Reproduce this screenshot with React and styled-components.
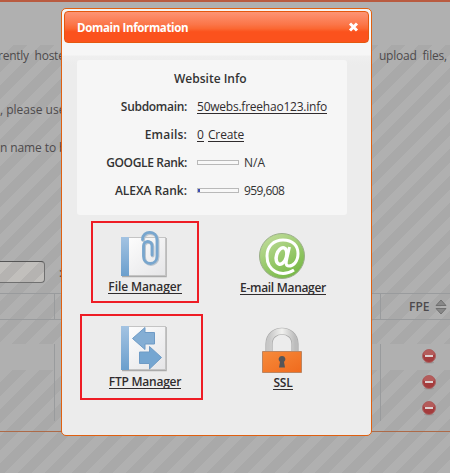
import React from 'react';
import styled, { createGlobalStyle } from 'styled-components';

const Global = createGlobalStyle`
  *{box-sizing:border-box}
  body{margin:0;overflow:hidden;font-family:"Open Sans","Noto Sans",sans-serif;font-size:12px;color:#333}
`;
const Screen = styled.div`
  position:relative;width:450px;height:473px;overflow:hidden;
  background:linear-gradient(135deg,#a9a9a9 25%,#b0b0b0 25%,#b0b0b0 50%,#a9a9a9 50%,#a9a9a9 75%,#b0b0b0 75%) 5px 0/27px 27px;
`;
const Page = styled.main`
  display:flex;flex-direction:column;height:473px;color:#4d4a4c;
`;
const TopRule = styled.div`height:2px;background:#b95b40;flex:none;`;
const Masthead = styled.div`height:43px;flex:none;background:#b0b0b0;`;
const Copy = styled.section`
  height:248px;flex:none;display:flex;flex-direction:column;
`;
const Line = styled.p`
  display:flex;justify-content:space-between;margin:${p => p.$top}px 0 0;height:16px;line-height:16px;
  flex:none;white-space:pre;padding-right:3px;font-weight:500;
`;
const Phrase = styled.span`
  letter-spacing:${p => p.$track || 0}px;margin-left:${p => p.$shift || 0}px;
`;
const SearchRow = styled.div`
  display:flex;gap:14px;margin-top:105px;height:22px;align-items:center;
`;
const Field = styled.div`
  width:45px;height:22px;border:1px solid #707070;border-top-color:#555;border-left:0;border-radius:0 4px 4px 0;
  background:linear-gradient(135deg,#b5b3b1 25%,#c1bfbc 25%,#c1bfbc 50%,#b5b3b1 50%,#b5b3b1 75%,#c1bfbc 75%) 5px 8px/27px 27px;
`;
const TableHead = styled.div`
  display:grid;grid-template-columns:54px 326px 1fr;height:27px;flex:none;
  border-top:1px solid #999b9d;border-bottom:1px solid #999b9d;
`;
const Cell = styled.div`
  border-left:${p => p.$rule ? '1px solid #999b9d' : '0'};
  display:flex;align-items:center;padding-left:${p => p.$pad || 0}px;gap:6px;
  font-weight:600;
`;
const Gap = styled.div`height:24px;flex:none;`;
const Row = styled.div`
  display:grid;grid-template-columns:54px 326px 1fr;height:${p => p.$h}px;flex:none;
  background:${p => p.$striped ? 'transparent' : '#b0b0b0'};
  svg{margin-bottom:1px}
`;
const TableFoot = styled.div`height:10px;flex:none;`;
const Footer = styled.div`flex:1;border-top:1px solid #ad6a48;`;

const Dialog = styled.section`
  position:absolute;left:61px;top:8px;width:311px;height:428px;padding:2px;
  border:1px solid #e06010;border-radius:5px;
  background:linear-gradient(#f6f6f6 0,#f6f6f6 46px,#efefef 47px,#ececec 56px,#ececec 100%);
`;
const Header = styled.header`
  display:flex;justify-content:space-between;align-items:center;height:32px;
  padding:0 9px 0 12px;border:1px solid #e4580f;border-radius:4px;color:#fff;font-weight:700;font-size:11.5px;
  background:linear-gradient(#fd9574 0,#fb7548 42%,#fb6833 55%,#fb521d 66%,#fb521d 100%);
`;
const Info = styled.div`
  margin:17px 0 0 13px;width:270px;height:155px;padding-top:9px;background:#f6f6f6;border-radius:3px;
`;
const InfoTitle = styled.h2`
  margin:0 0 8px;height:20px;line-height:20px;font-size:12px;font-weight:600;padding-left:97px;
`;
const Fact = styled.div`
  display:grid;grid-template-columns:110px 1fr;column-gap:10px;height:28px;line-height:20px;white-space:nowrap;
`;
const Label = styled.strong`
  justify-self:end;font-weight:600;letter-spacing:${p => p.$track || 0}px;
`;
const Value = styled.div`display:flex;gap:4px;font-weight:500;`;
const Link = styled.a`
  color:#302c2e;border-bottom:1px solid #302c2e;height:14px;line-height:14px;flex:none;
  margin-top:${p => p.$mt ?? 3}px;
  letter-spacing:${p => p.$track || 0}px;font-weight:${p => p.$bold ? 600 : 500};white-space:nowrap;
`;
const Meter = styled.span`
  width:42px;height:5px;border:1px solid #b9b9b9;margin:7px 1px 0 0;background:#f8f8f8;
`;
const MeterFill = styled.span`display:block;width:2px;height:3px;background:#3e4cb4;`;
const Tools = styled.nav`
  display:grid;grid-template-columns:139px 136px;grid-template-rows:93px 86px;
  margin:6px 0 0 27px;
`;
const Tool = styled.div`
  display:flex;flex-direction:column;align-items:center;
  width:${p => p.$w}px;height:${p => p.$h}px;padding-top:${p => p.$pt}px;padding-left:${p => p.$pl || 0}px;
  margin-left:${p => p.$ml || 0}px;
  border:2px solid ${p => p.$mark ? '#ee1c25' : 'transparent'};
  svg{flex:none}
`;

const Book = ({ top, bottom, children }) => (
  <svg width="50" height="53" viewBox="0 0 50 53">
    <defs>
      <linearGradient id="cover" x2="1" y2="1"><stop stopColor="#fff" /><stop offset="1" stopColor="#e5e5e7" /></linearGradient>
      <linearGradient id="spine" x2="0" y2="1"><stop stopColor="#a3c3e2" /><stop offset="1" stopColor="#6b9fcd" /></linearGradient>
    </defs>
    <path d={`M2 ${bottom + 0.5}H46V${top + 1}`} fill="none" stroke="#aaa" strokeWidth="1.500" />
    <rect x="1.500" y={top + 0.5} width="44" height={bottom - top - 1} fill="url(#cover)" stroke="#c4c4c4" />
    <rect x="1" y={top} width="8" height={bottom - top} fill="url(#spine)" />
    {children}
  </svg>
);
const CLIP = 'M22.500 11.500C22.500 2 37 2 37 12v16c0 10-13.500 10-13.500 0V18c0-6 8.500-6 8.500 0v9';
const FileIcon = () => (
  <Book top={9} bottom={48}>
    <g fill="none" strokeLinecap="round">
      <path d={CLIP} stroke="#b9c4ce" strokeWidth="3.500" transform="translate(.7 .7)" />
      <path d={CLIP} stroke="#78a6ce" strokeWidth="2.800" />
    </g>
  </Book>
);
const FtpIcon = () => (
  <Book top={7} bottom={51}>
    <path d="M12.500 19.500 25 8.500v5h9.500V25H25v5.500z" fill="#84aed4" stroke="#6e9bc6" />
    <path d="M41.500 38.500 29.500 27.500V33H19.500v11.500h10v5.500z" fill="#75a6d1" stroke="#6e9bc6" />
  </Book>
);
const MailIcon = () => (
  <svg width="52" height="48" viewBox="0 0 52 48">
    <defs><linearGradient id="green" x1=".2" x2=".8" y2="1"><stop stopColor="#c0dc9a" /><stop offset="1" stopColor="#72b640" /></linearGradient></defs>
    <circle cx="25" cy="24" r="22.500" fill="url(#green)" stroke="#9aae88" />
    <g fill="none" stroke="#fff" transform="translate(1 0)">
      <path d="M36 38c-13 8-27 1-27-14C9 14 16 8 25 8c10 0 15 6 15 13.500 0 9-5.500 12.500-9 12.500-4 0-3-4-2-8l2.500-11" strokeWidth="3" />
      <ellipse cx="23.500" cy="24" rx="5" ry="8.500" transform="rotate(17 23.500 24)" strokeWidth="3.500" />
    </g>
  </svg>
);
const LockIcon = () => (
  <svg width="44" height="48" viewBox="0 0 44 48">
    <defs>
      <linearGradient id="lock" x2="1" y2="1"><stop stopColor="#f68b3b" /><stop offset="1" stopColor="#f06a1d" /></linearGradient>
      <linearGradient id="steel"><stop stopColor="#c7c7c7" /><stop offset=".5" stopColor="#f1f1ef" /><stop offset="1" stopColor="#bcbcbc" /></linearGradient>
    </defs>
    <path d="M8 26V18C8 1 34 1 34 18v8" fill="none" stroke="#a8a8a8" strokeWidth="7.200" />
    <path d="M8 26V18C8 1 34 1 34 18v8" fill="none" stroke="url(#steel)" strokeWidth="5.800" />
    <path d="M1.500 25.500h39v21h-39z" fill="url(#lock)" stroke="#bd8560" />
    <path d="M21 30a3.300 3.300 0 0 1 2 6l1 5.500h-6l1-5.500a3.300 3.300 0 0 1 2-6z" fill="#555558" />
  </svg>
);
const CloseIcon = () => (
  <svg width="11" height="10" viewBox="0 0 11 10"><path d="m2 1.500 7 7m0-7-7 7" stroke="#fff" strokeWidth="3" /></svg>
);
const SortIcon = () => (
  <svg width="12" height="16" viewBox="0 0 12 16">
    <path d="M1 6.500 6 1l5 5.500zM1 9.500 6 15l5-5.500z" fill="#888" stroke="#666" strokeWidth=".8" />
  </svg>
);
const DenyIcon = () => (
  <svg width="14" height="15" viewBox="0 0 14 15">
    <ellipse cx="7" cy="13.500" rx="5" ry="1" fill="#999" />
    <circle cx="7" cy="7" r="6.500" fill="#a43c3d" stroke="#a66" />
    <path d="M1.500 6a5.500 5.500 0 0 1 11 0z" fill="#b45c5b" />
    <path d="M3 6h8v2H3z" fill="#ddd1d1" />
  </svg>
);

const rows = [{ h: 26, striped: false }, { h: 26, striped: true }, { h: 25, striped: true }];

export default function App() {
  return (
    <Screen>
      <Global />
      <Page>
        <TopRule /><Masthead />
        <Copy>
          <Line $top={3}><Phrase $shift={-2} $track={-0.25}>rently  hosted</Phrase><Phrase $track={-0.2}>upload  files,</Phrase></Line>
          <Line $top={38}><Phrase $track={0}>, please use</Phrase></Line>
          <Line $top={22}><Phrase $track={-0.1}>n name to b</Phrase></Line>
          <SearchRow><Field /><span>:</span></SearchRow>
        </Copy>
        <TableHead><Cell /><Cell $rule /><Cell $rule $pad={28}>FPE<SortIcon /></Cell></TableHead>
        <Gap />
        {rows.map((r, i) => (
          <Row key={i} $h={r.h} $striped={r.striped}><Cell /><Cell $rule /><Cell $rule $pad={41}><DenyIcon /></Cell></Row>
        ))}
        <TableFoot />
        <Footer />
      </Page>
      <Dialog>
        <Header><Phrase $track={-0.35}>Domain Information</Phrase><CloseIcon /></Header>
        <Info>
          <InfoTitle><Phrase>Website Info</Phrase></InfoTitle>
          <Fact><Label $track={-0.3}>Subdomain:</Label><Value><Link $track={-0.23}>50webs.freehao123.info</Link></Value></Fact>
          <Fact><Label $track={0.2}>Emails:</Label><Value><Link>0</Link><Link $track={-0.1}>Create</Link></Value></Fact>
          <Fact><Label $track={-0.35}>GOOGLE Rank:</Label><Value><Meter /><span>N/A</span></Value></Fact>
          <Fact><Label>ALEXA Rank:</Label><Value><Meter><MeterFill /></Meter><Phrase $track={-0.55}>959,608</Phrase></Value></Fact>
        </Info>
        <Tools>
          <Tool $mark $w={108} $h={82} $pt={5}><FileIcon /><Link $bold $mt={-1} $track={-0.1}>File Manager</Link></Tool>
          <Tool $w={106} $h={82} $pt={9}><MailIcon /><Link $bold $mt={1} $track={-0.3}>E-mail Manager</Link></Tool>
          <Tool $mark $w={123} $h={86} $pt={3} $pl={7} $ml={-11}><FtpIcon /><Link $bold $mt={3} $track={-0.25}>FTP Manager</Link></Tool>
          <Tool $w={106} $h={86} $pt={10}><LockIcon /><Link $bold $mt={2} $track={-0.2}>SSL</Link></Tool>
        </Tools>
      </Dialog>
    </Screen>
  );
}
